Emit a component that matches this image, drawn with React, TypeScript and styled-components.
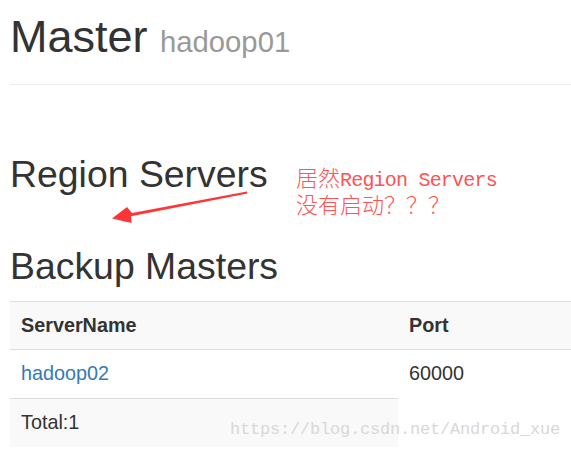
import React from "react";
import styled, { createGlobalStyle } from "styled-components";

interface BackupMaster {
  name: string;
  port: number;
}

const backupMasters: BackupMaster[] = [{ name: "hadoop02", port: 60000 }];

const GlobalStyle = createGlobalStyle`
  html, body {
    margin: 0;
    padding: 0;
    background: #fff;
    overflow: hidden;
  }
  body {
    font-family: "Liberation Sans", Arial, sans-serif;
    color: #333;
  }
`;

const App: React.FC = () => {
  return (
    <>
      <GlobalStyle />
      <Page>
        <PageHeader>
          <Title>
            Master <Small>hadoop01</Small>
          </Title>
        </PageHeader>

        <SectionTitle top={69}>Region Servers</SectionTitle>

        <SectionTitle top={51}>Backup Masters</SectionTitle>
        <Table>
          <tbody>
            <tr>
              <HeadCell striped>ServerName</HeadCell>
              <HeadCell striped>Port</HeadCell>
            </tr>
            {backupMasters.map((m) => (
              <tr key={m.name}>
                <Cell>
                  <Link href="#">{m.name}</Link>
                </Cell>
                <Cell>{m.port}</Cell>
              </tr>
            ))}
            <tr>
              <Cell striped>Total:{backupMasters.length}</Cell>
            </tr>
          </tbody>
        </Table>

        {/* screenshot annotation */}
        <Arrow width="571" height="450" viewBox="0 0 571 450">
          <polygon
            points="247,191.6 247.5,193.4 131,216.3 131.5,223 112,218.4 127,207 132,213"
            fill="#ff3535"
          />
        </Arrow>
        <Note>
          居然<Latin>Region Servers</Latin>
          <br />
          没有启动？？？
        </Note>
        <Watermark>https://blog.csdn.net/Android_xue</Watermark>
      </Page>
    </>
  );
};

const Page = styled.div`
  position: relative;
  width: 571px;
  height: 450px;
  padding-left: 10px;
  box-sizing: border-box;
`;

const PageHeader = styled.div`
  padding: 12px 0 22px;
  border-bottom: 1px solid #eee;
`;

const Title = styled.h1`
  margin: 0;
  font-size: 45px;
  font-weight: 400;
  line-height: 1.1;
  color: #333;
`;

const Small = styled.small`
  font-size: 65%;
  color: #999;
`;

const SectionTitle = styled.h2<{ top: number }>`
  margin: ${({ top }) => top}px 0 14px;
  font-size: 37.4px;
  font-weight: 400;
  line-height: 1.1;
  color: #333;
`;

const Table = styled.table`
  width: 100%;
  border-collapse: collapse;
  border-spacing: 0;
  font-size: 19.8px;
  line-height: 27px;
`;

const Cell = styled.td<{ striped?: boolean }>`
  padding: 10px 11px 11px;
  border-top: 1px solid #ddd;
  text-align: left;
  vertical-align: top;
  background: ${({ striped }) => (striped ? "#f9f9f9" : "transparent")};
  &:first-child {
    width: 366px;
  }
`;

const HeadCell = styled.th<{ striped?: boolean }>`
  padding: 10px 11px;
  border-top: 1px solid #ddd;
  text-align: left;
  font-weight: 700;
  color: #333;
  background: ${({ striped }) => (striped ? "#f9f9f9" : "transparent")};
  &:first-child {
    width: 366px;
  }
`;

const Link = styled.a`
  color: #337ab7;
  text-decoration: none;
`;

const Arrow = styled.svg`
  position: absolute;
  left: 0;
  top: 0;
  pointer-events: none;
`;

const Note = styled.div`
  position: absolute;
  left: 296px;
  top: 167px;
  font-family: "Liberation Mono", "Noto Sans CJK SC", monospace;
  font-size: 22px;
  line-height: 27px;
  font-weight: 300;
  color: #ff5252;
  white-space: nowrap;
`;

const Latin = styled.span`
  font-size: 20px;
  letter-spacing: -0.8px;
`;

const Watermark = styled.div`
  position: absolute;
  left: 230px;
  top: 419px;
  font-family: "Liberation Mono", monospace;
  font-size: 17px;
  letter-spacing: -0.2px;
  line-height: 22px;
  color: #d8d8d8;
  white-space: nowrap;
  pointer-events: none;
`;

export default App;
